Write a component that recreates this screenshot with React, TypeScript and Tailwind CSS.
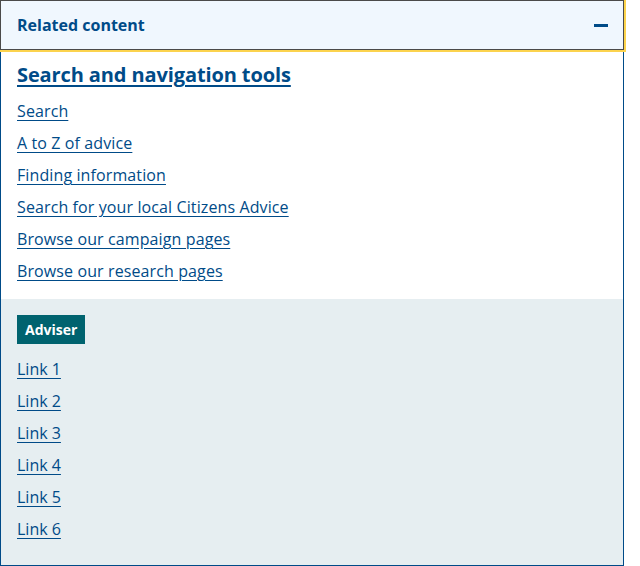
import React from "react";

const top = [
  "Search",
  "A to Z of advice",
  "Finding information",
  "Search for your local Citizens Advice",
  "Browse our campaign pages",
  "Browse our research pages",
];
const adviser = ["Link 1", "Link 2", "Link 3", "Link 4", "Link 5", "Link 6"];

export default function App() {
  return (
    <div
      className="w-[624px] h-[566px] flex flex-col text-[#004b88]"
      style={{ fontFamily: '"Open Sans", sans-serif' }}
    >
      <div className="h-[50px] shrink-0 border border-[#4a4a4a] bg-[#f0f7fe] outline-2 outline-[#fcd34d] flex items-center justify-between pl-4 pr-4 relative z-10">
        <span className="text-[16px] font-bold leading-6">Related content</span>
        <span className="block w-[14px] h-[3px] bg-[#004b88] mr-[-1px]" />
      </div>
      <div className="flex-1 flex flex-col border-x border-b border-[#004b88]">
        <div className="bg-white pl-4 pt-[10px] pb-4">
          <a href="#" className="block text-[20px] font-bold leading-[30px] tracking-[-0.11px] underline underline-offset-[3px] decoration-[2px] w-fit">
            Search and navigation tools
          </a>
          <ul className="mt-[9px] flex flex-col gap-2">
            {top.map((t) => (
              <li key={t}>
                <a href="#" className="text-[16px] leading-6 tracking-[0.11px] underline underline-offset-[3px]">
                  {t}
                </a>
              </li>
            ))}
          </ul>
        </div>
        <div className="flex-1 bg-[#e6eef1] pl-4 pt-4">
          <span className="inline-block bg-[#00636f] text-white text-[14px] font-bold leading-[21px] px-2 py-1">
            Adviser
          </span>
          <ul className="mt-[13px] flex flex-col gap-2">
            {adviser.map((t) => (
              <li key={t}>
                <a href="#" className="text-[16px] leading-6 underline underline-offset-[3px]">
                  {t}
                </a>
              </li>
            ))}
          </ul>
        </div>
      </div>
    </div>
  );
}
